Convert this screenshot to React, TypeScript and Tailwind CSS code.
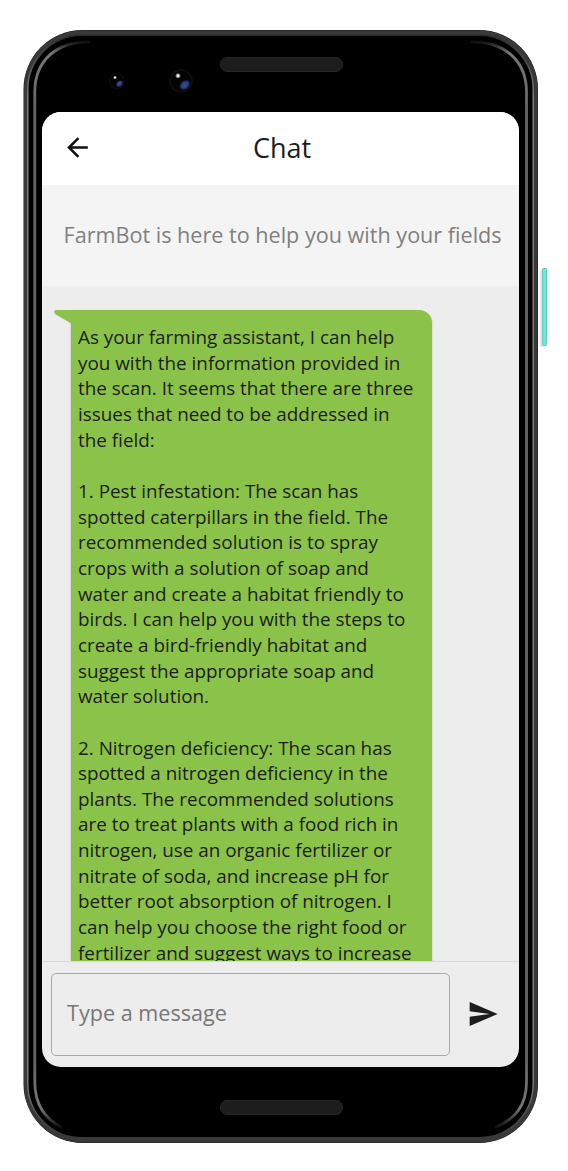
import React from "react";

const lines = [
  "As your farming assistant, I can help",
  "you with the information provided in",
  "the scan. It seems that there are three",
  "issues that need to be addressed in",
  "the field:",
  "",
  "1. Pest infestation: The scan has",
  "spotted caterpillars in the field. The",
  "recommended solution is to spray",
  "crops with a solution of soap and",
  "water and create a habitat friendly to",
  "birds. I can help you with the steps to",
  "create a bird-friendly habitat and",
  "suggest the appropriate soap and",
  "water solution.",
  "",
  "2. Nitrogen deficiency: The scan has",
  "spotted a nitrogen deficiency in the",
  "plants. The recommended solutions",
  "are to treat plants with a food rich in",
  "nitrogen, use an organic fertilizer or",
  "nitrate of soda, and increase pH for",
  "better root absorption of nitrogen. I",
  "can help you choose the right food or",
  "fertilizer and suggest ways to increase",
];

function Lens({ size }: { size: number }) {
  return (
    <svg width={size} height={size} viewBox="0 0 24 24" className="block">
      <defs>
        <radialGradient id={`blue${size}`}>
          <stop offset="0" stopColor="#3a4f9e" />
          <stop offset="0.55" stopColor="#2b3c80" />
          <stop offset="1" stopColor="#1a2450" stopOpacity="0" />
        </radialGradient>
        <radialGradient id={`glint${size}`}>
          <stop offset="0.2" stopColor="#ffffff" />
          <stop offset="1" stopColor="#ffffff" stopOpacity="0" />
        </radialGradient>
      </defs>
      <circle cx="12" cy="12" r="11" fill="#020203" stroke="#0f0f11" strokeWidth="1.6" />
      <ellipse cx="15.8" cy="16" rx="6.8" ry="5" fill={`url(#blue${size})`} transform="rotate(-40 15.8 16)" />
      <circle cx="9" cy="6.8" r="3" fill={`url(#glint${size})`} />
    </svg>
  );
}

function Frame() {
  return (
    <svg width="568" height="1171" viewBox="0 0 568 1171" className="pointer-events-none absolute left-0 top-0">
      <defs>
        <linearGradient id="shine" x1="0" y1="40" x2="0" y2="1130" gradientUnits="userSpaceOnUse">
          <stop offset="0" stopColor="#777" stopOpacity="0" />
          <stop offset="0.012" stopColor="#777" />
          <stop offset="0.06" stopColor="#686868" />
          <stop offset="0.94" stopColor="#686868" />
          <stop offset="0.98" stopColor="#777" />
          <stop offset="1" stopColor="#777" stopOpacity="0" />
        </linearGradient>
        <linearGradient id="rim" x1="0" y1="30" x2="0" y2="1143" gradientUnits="userSpaceOnUse">
          <stop offset="0.005" stopColor="#2a2a2a" />
          <stop offset="0.06" stopColor="#7c7c7c" />
          <stop offset="0.94" stopColor="#7c7c7c" />
          <stop offset="0.992" stopColor="#3a3a3a" />
        </linearGradient>
      </defs>
      <rect x="23.5" y="30" width="514.5" height="1113" rx="59" fill="#1c1c1c" />
      <rect x="24" y="30.5" width="513.5" height="1112" rx="58" fill="#393939" />
      <rect x="27.8" y="35.3" width="505.4" height="1102.5" rx="54" fill="#000" stroke="url(#rim)" strokeWidth="1.5" />
      <path d="M90 41.5C56 41.5 34.8 61 34.8 92V1082C34.8 1106 46 1119 62 1128" fill="none" stroke="url(#shine)" strokeWidth="2.8" />
      <path d="M471 41.5C505 41.5 526.5 61 526.5 92V1082C526.5 1106 515 1119 495 1128" fill="none" stroke="url(#shine)" strokeWidth="2.8" />
    </svg>
  );
}

export default function App() {
  return (
    <div className="relative flex h-[1171px] w-[568px] flex-col overflow-hidden bg-white pl-[42px] font-['Open_Sans',sans-serif] text-[#1c1c1c]">
      <Frame />
      <div className="absolute left-[542px] top-[268px] h-[78px] w-[5px] rounded-[1.5px] border border-[#62cdbb] bg-[#74e5d2] shadow-[-2px_1px_2px_rgba(0,0,0,0.12)]" />
      <div className="relative flex h-28 w-[477px] shrink-0">
        <div className="absolute left-[66.5px] top-[73px]"><Lens size={16} /></div>
        <div className="absolute left-[127px] top-[69px]"><Lens size={24} /></div>
        <div className="ml-[178px] mt-[57px] h-[15px] w-[123px] rounded-[7px] border border-[#252525] bg-[#1d1d1d]" />
      </div>
      <main className="relative flex h-[955px] w-[477px] shrink-0 flex-col overflow-hidden rounded-[19px] bg-[#ededed]">
        <header className="flex h-[73px] shrink-0 items-center bg-white pb-[3px] pl-[20px]">
          <svg width="31" height="31" viewBox="0 0 24 24" fill="#111"><path d="M20 11H7.83l5.59-5.59L12 4l-8 8 8 8 1.41-1.41L7.83 13H20v-2z" /></svg>
          <h1 className="ml-[160px] whitespace-nowrap text-[27px] leading-none">Chat</h1>
        </header>
        <div className="flex h-[101px] shrink-0 items-center bg-[#f4f4f4] pl-[21.5px]">
          <p className="whitespace-nowrap text-[21.6px] text-[#808080]">FarmBot is here to help you with your fields</p>
        </div>
        <div className="h-[675px] shrink-0 overflow-hidden pl-[12px] pt-[24px]">
          <div className="relative ml-[17px] h-[800px] w-[361px] rounded-tr-[13px] bg-[#8bc34a] pl-[7px] pt-[15px] shadow-[0_1px_2px_rgba(0,0,0,0.25)]">
            <svg width="18" height="15" viewBox="0 0 18 15" className="absolute -left-[17px] top-0"><path d="M2 0H18V14L1 4Q-1 0 2 0Z" fill="#8bc34a" /></svg>
            {lines.map((l, i) => (
              <p key={i} className="h-[25.67px] whitespace-nowrap text-[18.87px] leading-[25.67px]">{l}</p>
            ))}
          </div>
        </div>
        <footer className="flex h-[106px] shrink-0 items-start border-t border-[#d8d8d8] pl-[9px] pt-[11px]">
          <div className="flex h-[83px] w-[399px] items-center rounded-[5px] border-[1.5px] border-[#a9a9a9] pb-[2px] pl-[15px] text-[21.6px] text-[#777]">Type a message</div>
          <svg width="32" height="32" viewBox="0 0 24 24" fill="#1d1d1d" className="ml-[17px] mt-[25px]"><path d="M2.01 21 23 12 2.01 3 2 10l15 2-15 2z" /></svg>
        </footer>
      </main>
      <div className="relative ml-[178px] mt-[33px] h-[15px] w-[123px] rounded-[7px] border border-[#252525] bg-[#1d1d1d]" />
    </div>
  );
}
